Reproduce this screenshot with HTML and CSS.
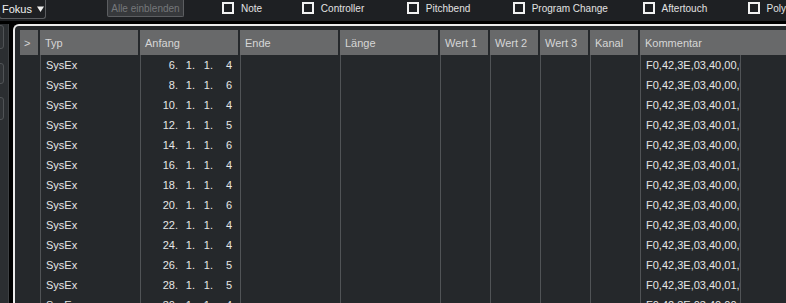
FILE: index.html
```html
<!DOCTYPE html>
<html lang="de">
  <head>
    <meta charset="UTF-8" />
    <title>Listen-Editor</title>
    <link rel="stylesheet" href="styles.css">
  </head>
  <body>
    <div class="toolbar">
      <div class="focus">
        Fokus
        <svg class="arrow" width="7" height="6" viewBox="0 0 7 6"><path d="M0 0.5 H7 L3.5 6 Z" fill="#f0f0f0" /></svg>
      </div>
      <button class="show-all">Alle einblenden</button>
      <label class="filter w-note"><span class="box"></span>Note</label>
      <label class="filter w-ctrl"><span class="box"></span>Controller</label>
      <label class="filter w-pitch"><span class="box"></span>Pitchbend</label>
      <label class="filter w-prog"><span class="box"></span>Program Change</label>
      <label class="filter w-after"><span class="box"></span>Aftertouch</label>
      <label class="filter"><span class="box"></span>Poly</label>
    </div>

    <div class="workspace">
      <div class="sidebar">
        <div class="side-btn b1"></div>
        <div class="side-btn b2"></div>
        <div class="side-btn b3"></div>
      </div>

      <div class="panel">
        <div class="head-row">
          <div class="col c-exp"><div class="head">&gt;</div></div>
          <div class="col c-wide"><div class="head">Typ</div></div>
          <div class="col c-wide"><div class="head">Anfang</div></div>
          <div class="col c-wide"><div class="head">Ende</div></div>
          <div class="col c-wide"><div class="head">Länge</div></div>
          <div class="col c-val"><div class="head">Wert 1</div></div>
          <div class="col c-val"><div class="head">Wert 2</div></div>
          <div class="col c-val"><div class="head">Wert 3</div></div>
          <div class="col c-val"><div class="head">Kanal</div></div>
          <div class="col c-rest"><div class="head last">Kommentar</div></div>
        </div>
        <div id="rows"></div>
      </div>
    </div>

    <script>
      const events = [
        [6, 4, "00"], [8, 6, "00"], [10, 4, "01"], [12, 5, "01"],
        [14, 6, "00"], [16, 4, "01"], [18, 4, "00"], [20, 6, "00"],
        [22, 4, "00"], [24, 4, "00"], [26, 5, "01"], [28, 5, "01"],
        [30, 4, "00"]
      ];

      const rows = document.getElementById("rows");

      events.forEach((ev) => {
        const row = document.createElement("div");
        row.className = "row";
        row.innerHTML = `
          <div class="cell c-exp"></div>
          <div class="cell c-wide line pad">SysEx</div>
          <div class="cell c-wide line pos">
            <span class="p-bar">${ev[0]}.</span><span class="p-beat">1.</span><span class="p-six">1.</span><span class="p-tick">${ev[1]}</span>
          </div>
          <div class="cell c-wide line"></div>
          <div class="cell c-wide line"></div>
          <div class="cell c-val line"></div>
          <div class="cell c-val line"></div>
          <div class="cell c-val line"></div>
          <div class="cell c-val line"></div>
          <div class="cell c-wide line pad clip">F0,42,3E,03,40,${ev[2]},00,00,00,F7</div>
          <div class="cell c-rest line"></div>`;
        rows.appendChild(row);
      });
    </script>
  </body>
</html>
```

FILE: styles.css
```css
body {
  margin: 0;
  height: 303px;
  overflow: hidden;
  background-color: #000;
  font-family: "Liberation Sans", Arial, sans-serif;
  color: #e6e6e6;
}

.toolbar {
  display: flex;
  align-items: flex-start;
  height: 21px;
  background-color: #1e2023;
  font-size: 10px;
}

.focus {
  display: flex;
  align-items: center;
  box-sizing: border-box;
  width: 47px;
  height: 19px;
  margin-left: -1px;
  padding-left: 2px;
  border: 1px solid #5b5d60;
  border-top: none;
  border-radius: 0 0 3px 3px;
  font-size: 11px;
  color: #f0f0f0;
}

.focus .arrow {
  margin-left: 5px;
}

.show-all {
  box-sizing: border-box;
  width: 77px;
  height: 17px;
  margin: 0 38px 0 61px;
  padding: 0;
  border: 1px solid #5c5e61;
  border-top: none;
  border-radius: 0 0 2px 2px;
  background-color: #37393c;
  color: #75777a;
  font-family: inherit;
  font-size: 10px;
}

.filter {
  display: flex;
  align-items: center;
  height: 16px;
  color: #e2e2e2;
  white-space: nowrap;
}

.filter .box {
  flex: none;
  box-sizing: border-box;
  width: 12px;
  height: 12px;
  margin-right: 7px;
  border: 2px solid #f2f2f2;
}

.w-note { width: 80px; }
.w-ctrl { width: 105px; }
.w-pitch { width: 106px; }
.w-prog { width: 130px; }
.w-after { width: 105px; }

.workspace {
  display: flex;
  height: 282px;
  padding-top: 3px;
}

.sidebar {
  position: relative;
  width: 8px;
  border-right: 1px solid #3e4144;
  background-color: #2b2e31;
  overflow: hidden;
}

.side-btn {
  position: absolute;
  left: -10px;
  width: 12px;
  border: 1px solid #505356;
  border-radius: 3px;
  background-color: #303336;
}

.b1 { top: 1px; height: 22px; }
.b2 { top: 39px; height: 19px; }
.b3 { top: 73px; height: 21px; }

.panel {
  flex: 1;
  margin-left: 4px;
  padding: 4px 0 0 5px;
  border-top: 2px solid #ececec;
  border-left: 2px solid #ececec;
  border-top-left-radius: 6px;
  background-color: #25282b;
}

.head-row,
.row {
  display: flex;
}

.col {
  flex: none;
}

.c-exp { width: 20px; flex: none; }
.c-wide { width: 100px; flex: none; }
.c-val { width: 50px; flex: none; }
.c-rest { flex: 1; }

.head {
  height: 25px;
  margin-right: 2px;
  padding-left: 5px;
  background-color: #68696a;
  color: #d6d6d6;
  font-size: 11px;
  line-height: 26px;
}

.head.last {
  margin-right: 0;
}

.c-exp .head {
  padding-left: 4px;
}

.row {
  height: 20px;
  font-size: 11px;
  line-height: 20px;
}

.cell {
  box-sizing: border-box;
  white-space: nowrap;
}

.line {
  border-left: 1px solid #505356;
}

.pad {
  padding-left: 5px;
}

.clip {
  overflow: hidden;
}

.pos span {
  display: inline-block;
  text-align: right;
}

.p-bar { width: 37px; }
.p-beat { width: 17px; }
.p-six { width: 18px; }
.p-tick { width: 19px; }
```
